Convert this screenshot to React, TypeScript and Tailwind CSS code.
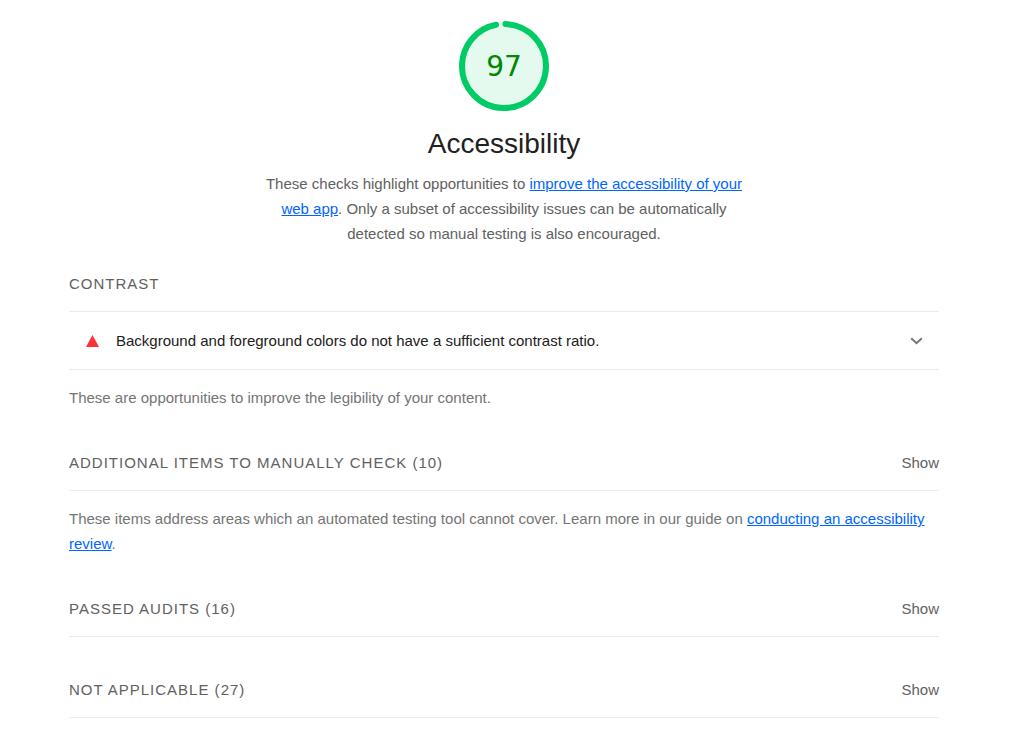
import { ReactNode } from "react";

function Link({ children }: { children: ReactNode }) {
  return (
    <a href="#guide" className="text-[#0066ff] underline">
      {children}
    </a>
  );
}

function Gauge({ score }: { score: number }) {
  return (
    <div className="relative flex size-24 items-center justify-center">
      <svg viewBox="0 0 120 120" className="absolute inset-0 size-full" aria-hidden="true">
        <circle cx="60" cy="60" r="56" fill="#e5faef" />
        <circle
          cx="60"
          cy="60"
          r="52.5"
          fill="none"
          stroke="#00cc66"
          strokeWidth="7.5"
          strokeLinecap="round"
          strokeDasharray="317.5 330"
          transform="rotate(-88 60 60)"
        />
      </svg>
      <span className="relative font-['DejaVu_Sans',sans-serif] text-[28px] text-[#008800]">{score}</span>
    </div>
  );
}

function Clump({ title, count }: { title: string; count: number }) {
  return (
    <div className="flex h-14 items-center justify-between border-b border-[#ebebeb]">
      <h2 className="uppercase tracking-[1px] text-[#616161]">
        {title} ({count})
      </h2>
      <button type="button" className="text-[#616161]">Show</button>
    </div>
  );
}

export default function App() {
  return (
    <main className="w-full bg-white pt-[18px] pr-[85px] pb-8 pl-[69px] font-['Liberation_Sans',Arial,sans-serif] text-[15px] leading-[25px] text-[#757575]">
      <header className="flex flex-col items-center text-center">
        <Gauge score={97} />
        <h1 className="mt-3 text-[28px] leading-9 text-[#212121]">Accessibility</h1>
        <p className="mt-[9px] max-w-[480px] text-[#616161]">
          These checks highlight opportunities to <Link>improve the accessibility of your web app</Link>. Only a
          subset of accessibility issues can be automatically detected so manual testing is also encouraged.
        </p>
      </header>
      <section className="mt-[10px]">
        <h2 className="flex h-14 items-center border-b border-[#ebebeb] uppercase tracking-[1px] text-[#616161]">
          Contrast
        </h2>
        <button
          type="button"
          className="flex h-[58px] w-full items-center border-b border-[#ebebeb] px-4 text-left text-[#212121]"
        >
          <svg viewBox="0 0 15 12" className="h-3 w-[15px]" aria-hidden="true">
            <path d="M7.5 0L14 12H1Z" fill="#ff3333" />
          </svg>
          <span className="mx-4 flex-1">Background and foreground colors do not have a sufficient contrast ratio.</span>
          <svg viewBox="0 0 13 8" className="h-2 w-[13px]" fill="none" stroke="#757575" strokeWidth="2" aria-hidden="true">
            <path d="M1.2 1.2L6.5 6.2L11.8 1.2" />
          </svg>
        </button>
        <p className="mt-[15px]">These are opportunities to improve the legibility of your content.</p>
      </section>
      <section className="mt-[25px]">
        <Clump title="Additional items to manually check" count={10} />
        <p className="mt-[15px]">
          These items address areas which an automated testing tool cannot cover. Learn more in our guide on{" "}
          <Link>conducting an accessibility review</Link>.
        </p>
      </section>
      <section className="mt-[25px]">
        <Clump title="Passed audits" count={16} />
      </section>
      <section className="mt-[25px]">
        <Clump title="Not applicable" count={27} />
      </section>
    </main>
  );
}
